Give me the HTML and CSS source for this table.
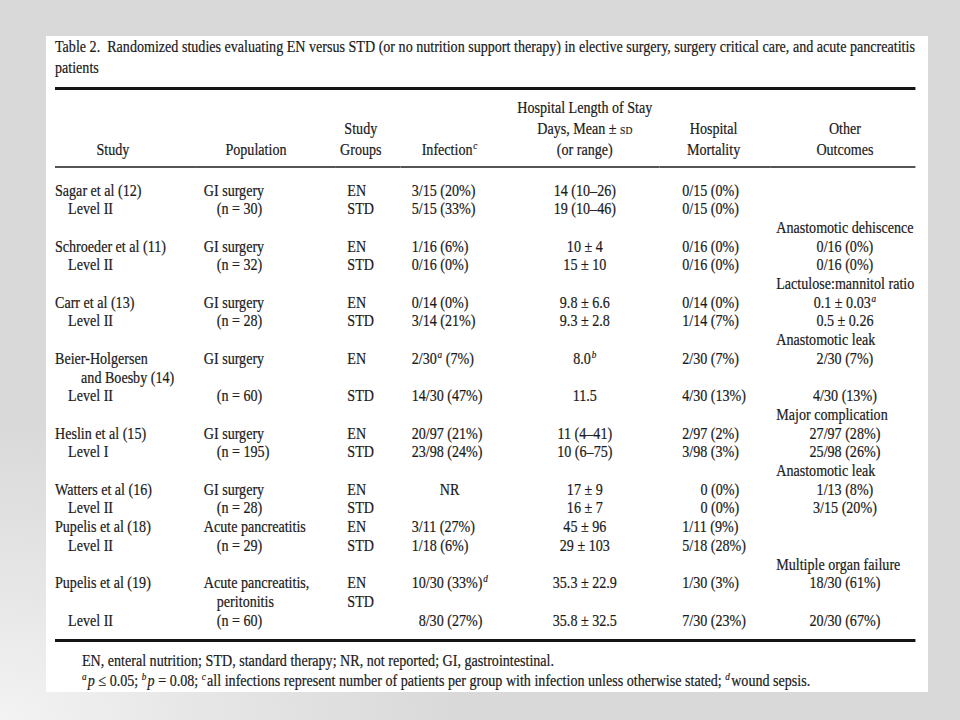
FILE: index.html
```html
<!DOCTYPE html>
<html lang="en">
<head>
<meta charset="utf-8">
<title>Table 2</title>
<link rel="stylesheet" href="styles.css">
</head>
<body>
<main class="slide">
  <section class="panel">
    <div class="sheet">
      <p class="caption">Table 2.&nbsp; Randomized studies evaluating EN versus STD (or no nutrition support therapy) in elective surgery, surgery critical care, and acute pancreatitis<br>patients</p>
      <table class="data">
        <colgroup>
          <col class="w-study"><col class="w-pop"><col class="w-grp"><col class="w-inf"><col class="w-los"><col class="w-mort"><col class="w-other">
        </colgroup>
        <thead>
          <tr>
            <th class="h-study">Study</th>
            <th class="h-pop">Population</th>
            <th class="h-grp">Study<br>Groups</th>
            <th class="h-inf">Infection<span class="sup">c</span></th>
            <th class="h-los">Hospital Length of Stay<br>Days, Mean ± <span class="sc">sd</span><br>(or range)</th>
            <th class="h-mort">Hospital<br>Mortality</th>
            <th class="h-other">Other<br>Outcomes</th>
          </tr>
        </thead>
        <tbody>
          <tr><td>Sagar et al (12)</td><td>GI surgery</td><td>EN</td><td>3/15 (20%)</td><td>14 (10–26)</td><td>0/15 (0%)</td><td></td></tr>
          <tr><td class="ind">Level II</td><td class="n">(n = 30)</td><td>STD</td><td>5/15 (33%)</td><td>19 (10–46)</td><td>0/15 (0%)</td><td></td></tr>
          <tr><td></td><td></td><td></td><td></td><td></td><td></td><td class="lbl">Anastomotic dehiscence</td></tr>
          <tr><td>Schroeder et al (11)</td><td>GI surgery</td><td>EN</td><td>1/16 (6%)</td><td>10 ± 4</td><td>0/16 (0%)</td><td>0/16 (0%)</td></tr>
          <tr><td class="ind">Level II</td><td class="n">(n = 32)</td><td>STD</td><td>0/16 (0%)</td><td>15 ± 10</td><td>0/16 (0%)</td><td>0/16 (0%)</td></tr>
          <tr><td></td><td></td><td></td><td></td><td></td><td></td><td class="lbl">Lactulose:mannitol ratio</td></tr>
          <tr><td>Carr et al (13)</td><td>GI surgery</td><td>EN</td><td>0/14 (0%)</td><td>9.8 ± 6.6</td><td>0/14 (0%)</td><td>0.1 ± 0.03<span class="sup">a</span></td></tr>
          <tr><td class="ind">Level II</td><td class="n">(n = 28)</td><td>STD</td><td>3/14 (21%)</td><td>9.3 ± 2.8</td><td>1/14 (7%)</td><td>0.5 ± 0.26</td></tr>
          <tr><td></td><td></td><td></td><td></td><td></td><td></td><td class="lbl">Anastomotic leak</td></tr>
          <tr><td>Beier-Holgersen</td><td>GI surgery</td><td>EN</td><td>2/30<span class="sup">a</span> (7%)</td><td>8.0<span class="sup">b</span></td><td>2/30 (7%)</td><td>2/30 (7%)</td></tr>
          <tr><td class="ind2">and Boesby (14)</td><td></td><td></td><td></td><td></td><td></td><td></td></tr>
          <tr><td class="ind">Level II</td><td class="n">(n = 60)</td><td>STD</td><td>14/30 (47%)</td><td>11.5</td><td>4/30 (13%)</td><td>4/30 (13%)</td></tr>
          <tr><td></td><td></td><td></td><td></td><td></td><td></td><td class="lbl">Major complication</td></tr>
          <tr><td>Heslin et al (15)</td><td>GI surgery</td><td>EN</td><td>20/97 (21%)</td><td>11 (4–41)</td><td>2/97 (2%)</td><td>27/97 (28%)</td></tr>
          <tr><td class="ind">Level I</td><td class="n">(n = 195)</td><td>STD</td><td>23/98 (24%)</td><td>10 (6–75)</td><td>3/98 (3%)</td><td>25/98 (26%)</td></tr>
          <tr><td></td><td></td><td></td><td></td><td></td><td></td><td class="lbl">Anastomotic leak</td></tr>
          <tr><td>Watters et al (16)</td><td>GI surgery</td><td>EN</td><td class="nr">NR</td><td>17 ± 9</td><td class="zero">0 (0%)</td><td>1/13 (8%)</td></tr>
          <tr><td class="ind">Level II</td><td class="n">(n = 28)</td><td>STD</td><td></td><td>16 ± 7</td><td class="zero">0 (0%)</td><td>3/15 (20%)</td></tr>
          <tr><td>Pupelis et al (18)</td><td>Acute pancreatitis</td><td>EN</td><td>3/11 (27%)</td><td>45 ± 96</td><td>1/11 (9%)</td><td></td></tr>
          <tr><td class="ind">Level II</td><td class="n">(n = 29)</td><td>STD</td><td>1/18 (6%)</td><td>29 ± 103</td><td>5/18 (28%)</td><td></td></tr>
          <tr><td></td><td></td><td></td><td></td><td></td><td></td><td class="lbl">Multiple organ failure</td></tr>
          <tr><td>Pupelis et al (19)</td><td>Acute pancreatitis,</td><td>EN</td><td>10/30 (33%)<span class="sup">d</span></td><td>35.3 ± 22.9</td><td>1/30 (3%)</td><td>18/30 (61%)</td></tr>
          <tr><td></td><td class="n">peritonitis</td><td>STD</td><td></td><td></td><td></td><td></td></tr>
          <tr><td class="ind">Level II</td><td class="n">(n = 60)</td><td></td><td class="inf-r">8/30 (27%)</td><td>35.8 ± 32.5</td><td>7/30 (23%)</td><td>20/30 (67%)</td></tr>
        </tbody>
      </table>
      <div class="notes">
        <p>EN, enteral nutrition; STD, standard therapy; NR, not reported; GI, gastrointestinal.</p>
        <p><span class="sup">a</span><i>p</i> ≤ 0.05; <span class="sup">b</span><i>p</i> = 0.08; <span class="sup">c</span>all infections represent number of patients per group with infection unless otherwise stated; <span class="sup">d</span>wound sepsis.</p>
      </div>
    </div>
  </section>
</main>
</body>
</html>
```
FILE: styles.css
```css
html, body {
  margin: 0;
  padding: 0;
}

body {
  width: 960px;
  height: 720px;
  overflow: hidden;
  background:
    radial-gradient(ellipse 460px 300px at 0 720px, #f3f3f3 0%, #e6e6e6 45%, rgba(217,217,217,0) 100%),
    #d9d9d9;
  font-family: "Liberation Serif", "Times New Roman", serif;
  color: #1a1a1a;
}

.slide {
  box-sizing: border-box;
  height: 720px;
  padding: 36px 0 0 46px;
}

.panel {
  box-sizing: border-box;
  width: 882px;
  height: 656px;
  background: #fff;
  overflow: hidden;
  padding: 1px 0 0 9px;
}

.sheet {
  width: 989px;
  font-size: 16.2px;
  -webkit-text-stroke: 0.2px #1a1a1a;
  transform: scaleX(0.87);
  transform-origin: 0 0;
}

.caption {
  margin: 0 0 7.5px;
  line-height: 21px;
  white-space: nowrap;
}

.data {
  width: 989px;
  table-layout: fixed;
  border-collapse: separate;
  border-spacing: 0;
  border-top: 3px solid #141414;
  border-bottom: 3px solid #141414;
}

.w-study { width: 161px; }
.w-pop { width: 161px; }
.w-grp { width: 75px; }
.w-inf { width: 126px; }
.w-los { width: 172px; }
.w-mort { width: 127px; }
.w-other { width: 167px; }

.data th {
  font-weight: normal;
  vertical-align: bottom;
  text-align: center;
  line-height: 21px;
  padding: 8.5px 0 5px;
  border-bottom: 2px solid #555;
  white-space: nowrap;
}

.data th.h-study { padding-right: 28px; }
.data th.h-pop { padding-right: 21px; }
.data th.h-grp { padding-right: 16px; }
.data th.h-inf { padding-right: 13px; }
.data th.h-mort { padding-right: 3px; }
.data th.h-other { padding-left: 5px; }

.data td {
  padding: 0;
  height: 18.7px;
  line-height: 18.7px;
  white-space: nowrap;
  text-align: left;
  vertical-align: top;
}

.data tbody tr:first-child td { padding-top: 13.5px; }
.data tbody tr:last-child td { padding-bottom: 8.5px; }

.data tbody td:nth-child(2) { padding-left: 10px; }
.data tbody td:nth-child(3) { padding-left: 14px; }
.data tbody td:nth-child(4) { padding-left: 13px; }
.data tbody td:nth-child(5) { text-align: center; }
.data tbody td:nth-child(6) { padding-left: 26px; }
.data tbody td:nth-child(7) { text-align: center; padding-left: 5px; }

.data tbody td.ind { padding-left: 15px; }
.data tbody td.ind2 { padding-left: 30px; }
.data tbody td.n { padding-left: 25px; }
.data tbody td.nr { text-align: center; padding-left: 0; padding-right: 13px; }
.data tbody td.zero { padding-left: 47px; }
.data tbody td.lbl { text-align: left; padding-left: 7px; }
.data tbody td.inf-r { padding-left: 21px; }

.sup {
  font-size: 10.5px;
  font-style: italic;
  vertical-align: 6px;
  line-height: 0;
  margin-left: 1px;
}

.sc {
  font-variant: small-caps;
}

.notes {
  margin-top: 9.2px;
  padding-left: 31px;
}

.notes p {
  margin: 0;
  line-height: 20px;
  white-space: nowrap;
}

.notes .sup {
  margin-left: 0;
  margin-right: 1.5px;
}
```
